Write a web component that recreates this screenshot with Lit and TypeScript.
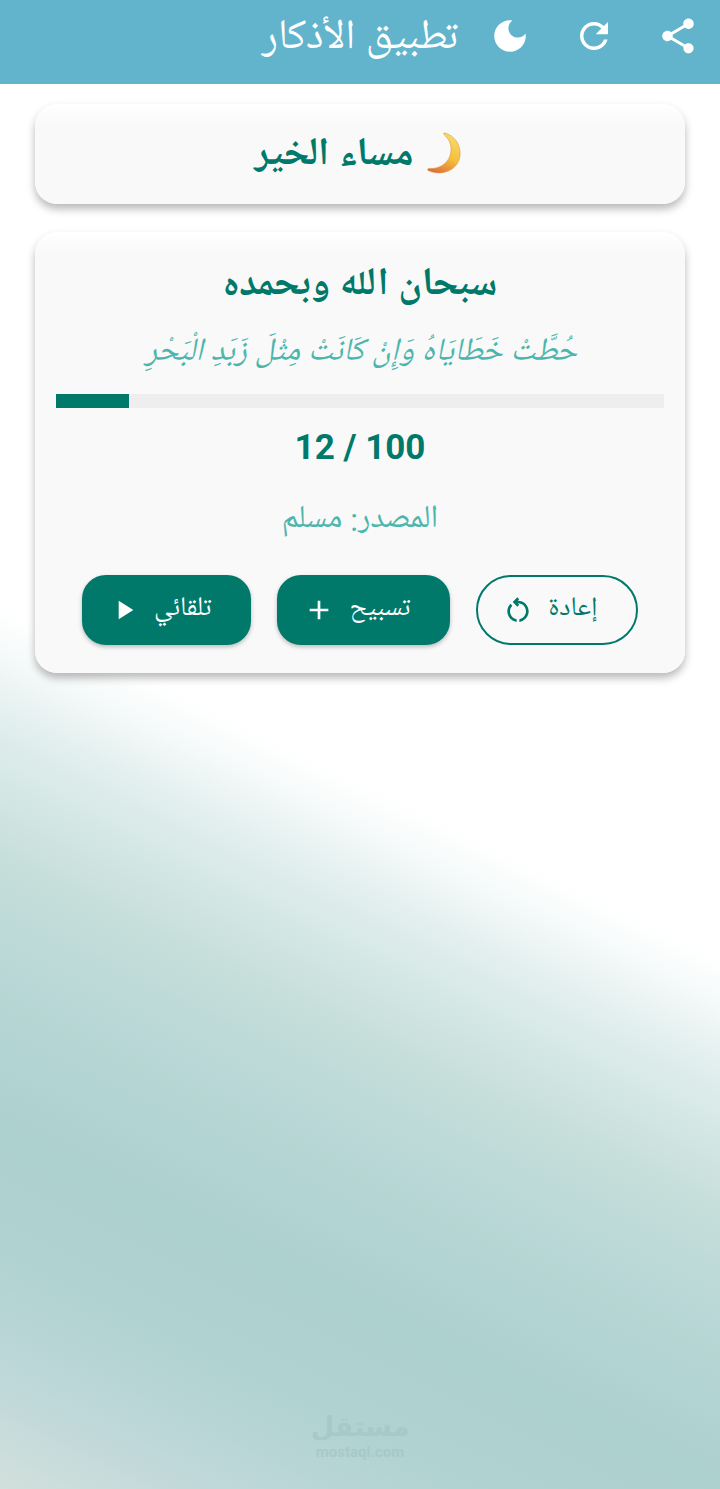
import { LitElement, html, css, svg } from "lit";
import { customElement, state } from "lit/decorators.js";

const SHARE = svg`<path d="M18 16.08c-.76 0-1.44.3-1.96.77L8.91 12.7c.05-.23.09-.46.09-.7s-.04-.47-.09-.7l7.05-4.11c.54.5 1.25.81 2.04.81 1.66 0 3-1.34 3-3s-1.34-3-3-3-3 1.34-3 3c0 .24.04.47.09.7L8.04 9.81C7.5 9.31 6.79 9 6 9c-1.66 0-3 1.34-3 3s1.34 3 3 3c.79 0 1.5-.31 2.04-.81l7.12 4.16c-.05.21-.08.43-.08.65 0 1.61 1.31 2.92 2.92 2.92s2.92-1.31 2.92-2.92-1.31-2.92-2.92-2.92z"/>`;
const REFRESH = svg`<path d="M17.65 6.35C16.2 4.9 14.21 4 12 4c-4.42 0-7.99 3.58-7.99 8s3.57 8 7.99 8c3.73 0 6.84-2.55 7.73-6h-2.08c-.82 2.33-3.04 4-5.65 4-3.31 0-6-2.69-6-6s2.69-6 6-6c1.66 0 3.14.69 4.22 1.78L13 11h7V4l-2.35 2.35z"/>`;
const MOON = svg`<path d="M12 3c-4.97 0-9 4.03-9 9s4.03 9 9 9 9-4.03 9-9c0-.46-.04-.92-.1-1.36-.98 1.37-2.58 2.26-4.4 2.26-2.98 0-5.4-2.42-5.4-5.4 0-1.81.89-3.42 2.26-4.4-.44-.06-.9-.1-1.36-.1z"/>`;
const PLAY = svg`<path d="M8 5v14l11-7z"/>`;
const PLUS = svg`<path d="M19 13h-6v6h-2v-6H5v-2h6V5h2v6h6v2z"/>`;
const RESTART = svg`<path d="M6 13c0-1.65.67-3.15 1.76-4.24L6.34 7.34C4.9 8.79 4 10.79 4 13c0 4.08 3.05 7.44 7 7.93v-2.02c-2.83-.48-5-2.94-5-5.91zm14 0c0-4.42-3.58-8-8-8-.06 0-.12.01-.18.01l1.09-1.09L11.5 2.5 8 6l3.5 3.5 1.41-1.41-1.08-1.08c.06 0 .12-.01.17-.01 3.31 0 6 2.69 6 6 0 2.97-2.17 5.43-5 5.91v2.02c3.95-.49 7-3.85 7-7.93z"/>`;

const icon = (shape: unknown) =>
  html`<svg class="icon" viewBox="0 0 24 24" aria-hidden="true">${shape}</svg>`;

@customElement("app-root")
export class AppRoot extends LitElement {
  @state() count = 12;
  @state() total = 100;

  static styles = css`
    :host {
      display: flex;
      flex-direction: column;
      min-height: 100vh;
      font-family: Roboto, "Noto Naskh Arabic UI", "Noto Naskh Arabic", "Noto Sans Arabic", "DejaVu Sans", sans-serif;
      color: #00796b;
      background: linear-gradient(206deg, #fff 52%, #f8fbfb 54%, #e2efee 58%, #c5deda 66%,
        #b8d7d6 72%, #add1cf 80%, #b0d2d1 87%, #bfd8d9 94%, #d2e0dc 100%);
    }
    * { box-sizing: border-box; }
    h1, h2, p { margin: 0; white-space: nowrap; }
    button { font: inherit; cursor: pointer; }
    .icon { display: block; fill: currentColor; }
    .bar {
      display: flex;
      justify-content: flex-end;
      align-items: center;
      height: 84px;
      padding-bottom: 12px;
      color: #fff;
      background: #61b4cb;
    }
    .bar h1 {
      margin-right: 10px;
      padding-top: 8px;
      font-size: 42px;
      line-height: 56px;
      font-weight: 400;
    }
    .tool {
      display: grid;
      place-items: center;
      width: 84px;
      height: 72px;
      padding: 0;
      border: 0;
      color: inherit;
      background: none;
    }
    .tool .icon { width: 42px; height: 42px; }
    main { display: flex; flex-direction: column; gap: 28px; padding: 20px 35px; }
    .card {
      border-radius: 22px;
      background: linear-gradient(#fff, #f9f9f9 22px);
      box-shadow: 0 5px 9px rgba(0, 0, 0, 0.28);
    }
    .greeting {
      display: flex;
      justify-content: center;
      align-items: center;
      gap: 14px;
      height: 100px;
    }
    .greeting h2, .title { padding-top: 6px; font-size: 39px; line-height: 52px; font-weight: 700; }
    .crescent { display: block; width: 38px; height: 44px; }
    .dhikr {
      display: flex;
      flex-direction: column;
      align-items: center;
      padding: 23px 21px 28px;
    }
    .verse { margin-top: 16px; font-size: 32px; line-height: 48px; font-style: italic; color: #4db6ac; }
    .track { width: 100%; height: 14px; margin-top: 17px; background: #eee; }
    .fill { height: 100%; background: #00796b; }
    .count { margin-top: 16px; font-size: 35px; line-height: 48px; font-weight: 700; }
    .source { margin-top: 24px; font-size: 32px; line-height: 48px; color: #4db6ac; }
    .actions { display: flex; justify-content: center; gap: 26px; margin-top: 31px; }
    .action {
      display: flex;
      align-items: center;
      gap: 14px;
      height: 70px;
      padding: 0 38px 0 24px;
      border: 2px solid #00796b;
      border-radius: 24px;
      font-size: 27px;
      line-height: 36px;
      white-space: nowrap;
      color: #fff;
      background: #00796b;
      box-shadow: 0 2px 4px rgba(0, 0, 0, 0.25);
    }
    .action .icon { width: 32px; height: 32px; }
    .outline { border-radius: 35px; color: #00796b; background: none; box-shadow: none; }
    footer {
      display: flex;
      flex-direction: column;
      align-items: center;
      margin-top: auto;
      padding-bottom: 28px;
      color: #a8c9c9;
      font-weight: 700;
    }
    .brand { font-family: "DejaVu Sans", sans-serif; font-size: 27px; line-height: 32px; }
    .site { font-size: 15px; line-height: 18px; }
  `;

  private add() {
    this.count = Math.min(this.total, this.count + 1);
  }

  render() {
    return html`
      <header class="bar">
        <h1 dir="rtl" lang="ar">تطبيق الأذكار</h1>
        <button class="tool" aria-label="الوضع الليلي">${icon(MOON)}</button>
        <button class="tool" aria-label="تحديث">${icon(REFRESH)}</button>
        <button class="tool" aria-label="مشاركة">${icon(SHARE)}</button>
      </header>
      <main lang="ar">
        <section class="card greeting">
          <h2 dir="rtl">مساء الخير</h2>
          <svg class="crescent" viewBox="0 0 38 44" aria-hidden="true">
            <defs>
              <linearGradient id="glow" x1="0.7" y1="0" x2="0.3" y2="1">
                <stop offset="0" stop-color="#f6dc6c" />
                <stop offset="0.55" stop-color="#f6bf3a" />
                <stop offset="1" stop-color="#e0703f" />
              </linearGradient>
            </defs>
            <path fill="url(#glow)" stroke="#d9973e" stroke-width="0.6"
              d="M18 1C28 4 34 13 33 24C31 38 15 45 1 38.500C0 37 1 36.500 3 36.500C14 37 23 30 24 19C24.500 11 21 6 17 2.500C16 1.500 17 .5 18 1Z" />
          </svg>
        </section>
        <section class="card dhikr">
          <h2 class="title" dir="rtl">سبحان الله وبحمده</h2>
          <p class="verse" dir="rtl">حُطَّتْ خَطَايَاهُ وَإِنْ كَانَتْ مِثْلَ زَبَدِ الْبَحْرِ</p>
          <div class="track" role="progressbar" aria-valuenow=${this.count} aria-valuemax=${this.total}>
            <div class="fill" style="width:${(this.count / this.total) * 100}%"></div>
          </div>
          <p class="count">${this.count} / ${this.total}</p>
          <p class="source" dir="rtl">المصدر: مسلم</p>
          <div class="actions">
            <button class="action">${icon(PLAY)}<span dir="rtl">تلقائي</span></button>
            <button class="action" @click=${this.add}>${icon(PLUS)}<span dir="rtl">تسبيح</span></button>
            <button class="action outline" @click=${() => (this.count = 0)}>${icon(RESTART)}<span dir="rtl">إعادة</span></button>
          </div>
        </section>
      </main>
      <footer>
        <span class="brand" dir="rtl" lang="ar">مستقل</span>
        <span class="site">mostaql.com</span>
      </footer>
    `;
  }
}
